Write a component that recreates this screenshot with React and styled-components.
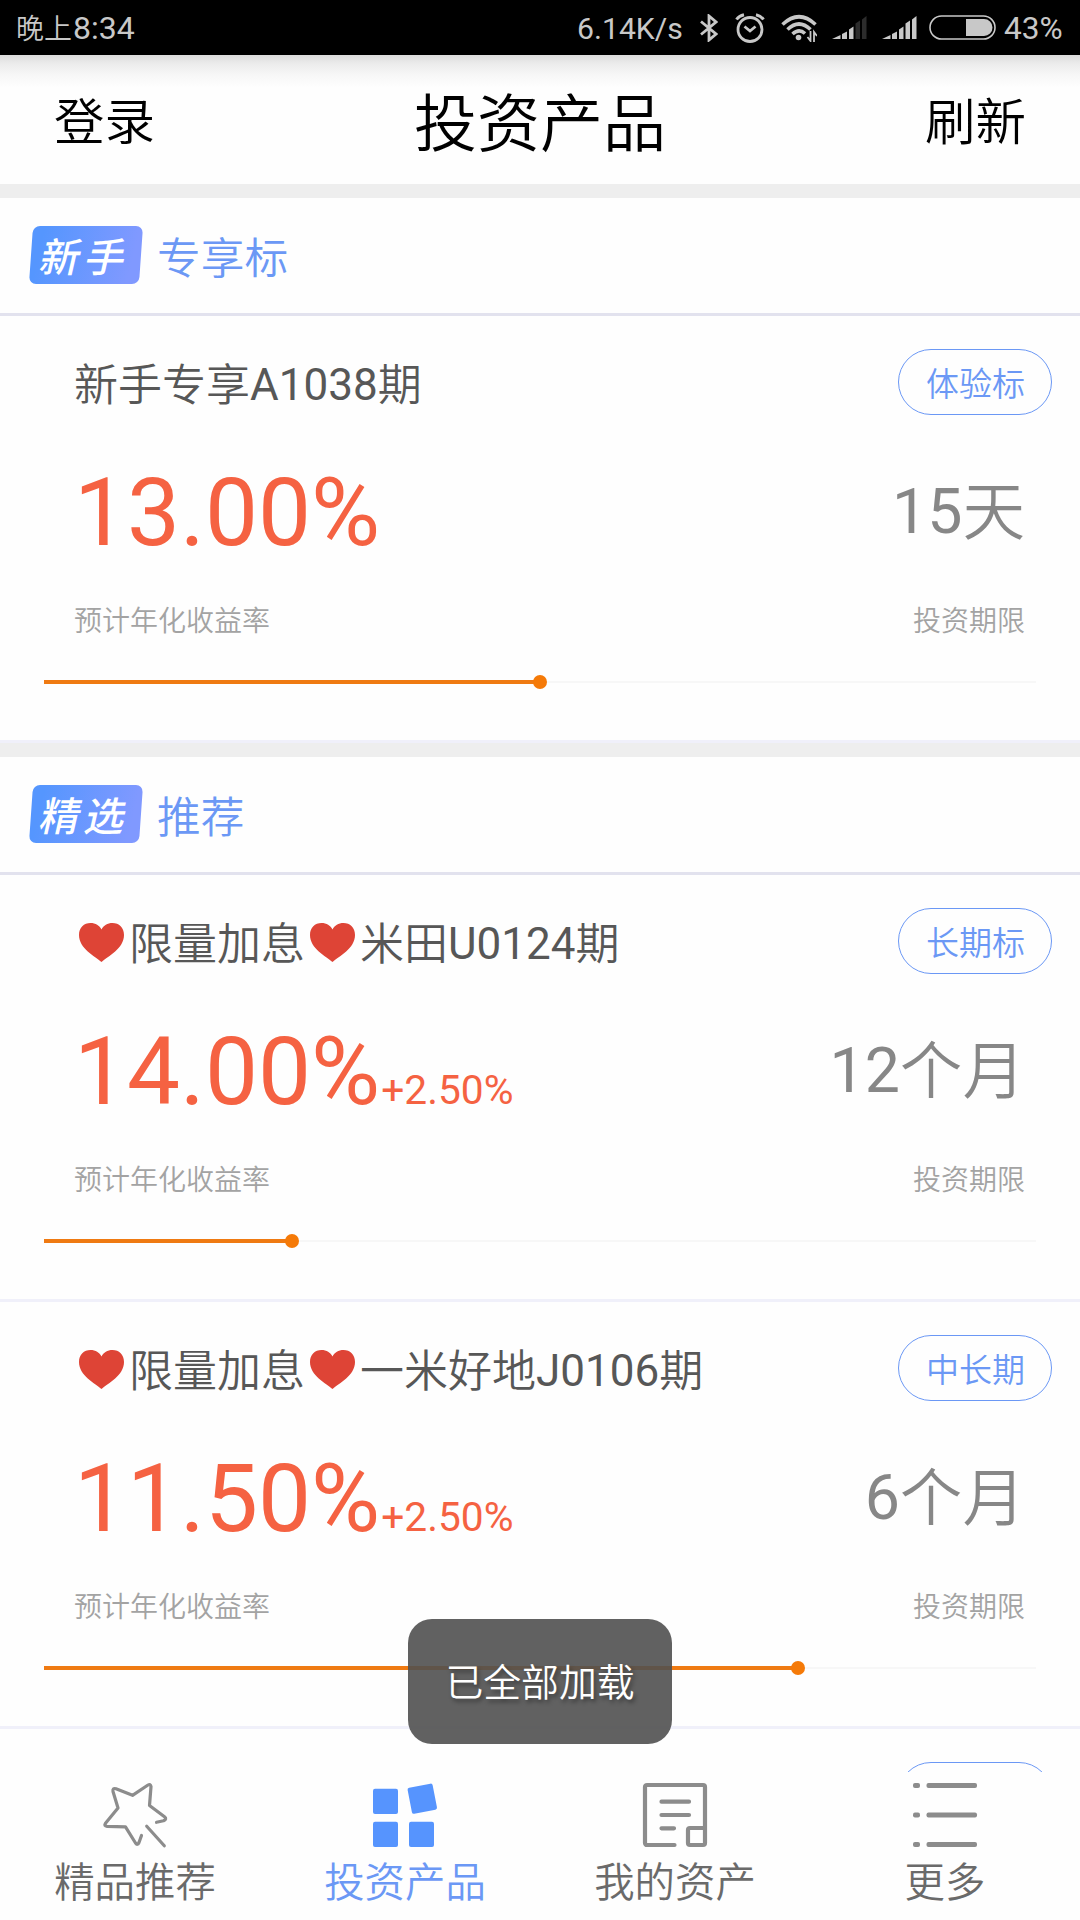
import React from 'react';
import styled, { createGlobalStyle } from 'styled-components';

const GlobalStyle = createGlobalStyle`
  * {
    box-sizing: border-box;
  }

  body {
    margin: 0;
    background: #fff;
    font-family: Roboto, 'Noto Sans CJK SC', sans-serif;
    font-weight: 350;
  }
`;

const BLUE = '#6b98f5';
const GREY = '#8c8c8c';
const STATUS = '#c8c8c8';

const Screen = styled.div`
  position: relative;
  display: flex;
  flex-direction: column;
  width: 1080px;
  height: 1920px;
  overflow: hidden;
  background: #fefefe;
`;

/* status bar */

const StatusBar = styled.div`
  flex: none;
  display: flex;
  align-items: center;
  justify-content: space-between;
  height: 55px;
  padding: 0 17px 0 16px;
  background: #000;
  color: ${STATUS};
  font-size: 32px;
  font-weight: 400;
  line-height: 55px;
`;

const Clock = styled.span`
  padding-top: 2px;
  white-space: nowrap;
`;

const ClockPeriod = styled.span`
  margin-right: 1px;
  font-size: 28px;
  font-weight: 350;
`;

const StatusIcons = styled.div`
  display: flex;
  align-items: center;
  height: 55px;

  svg {
    display: block;
    flex: none;
  }
`;

const Speed = styled.span`
  width: 106px;
  margin-right: 17px;
  padding-top: 1px;
  font-size: 30.2px;
  white-space: nowrap;
`;

const IconGap = styled.span`
  flex: none;
  width: ${(props) => props.$w}px;
`;

const Percent = styled.span`
  width: 59px;
  margin-left: 8px;
  padding-top: 1px;
  font-size: 31.6px;
  white-space: nowrap;
`;

/* title bar */

const TitleBar = styled.header`
  flex: none;
  display: grid;
  grid-template-columns: 1fr auto 1fr;
  align-items: center;
  height: 129px;
  padding: 0 54px;
  background: linear-gradient(#dcdcdc 0, #ececec 9px, #f7f7f7 20px, #fefefe 33px);
  color: #000;
`;

const TitleAction = styled.span`
  font-size: 50.5px;
  line-height: 60px;
  padding-top: 7px;
  text-align: ${(props) => (props.$end ? 'right' : 'left')};
`;

const Title = styled.h1`
  margin: 0;
  padding-top: 11px;
  font-size: 63px;
  font-weight: 350;
  line-height: 76px;
`;

const Band = styled.div`
  flex: none;
  height: 14px;
  background: #eee;
`;

/* product list */

const List = styled.main`
  flex: 1;
  min-height: 0;
  overflow: hidden;
`;

const SectionHead = styled.div`
  display: flex;
  align-items: center;
  height: 118px;
  padding: 0 0 2px 31px;
  border-bottom: 3px solid #e2e2ee;
`;

const Badge = styled.span`
  display: flex;
  align-items: center;
  justify-content: center;
  width: 110px;
  height: 58px;
  padding-top: 7px;
  border-radius: 7px;
  background: linear-gradient(100deg, #5596fe 10%, #8099ff 90%);
  transform: skewX(-4deg);
`;

const BadgeText = styled.span`
  color: #fff;
  font-size: 40px;
  font-weight: 500;
  line-height: 58px;
  letter-spacing: 5px;
  margin-right: 0;
  transform: skewX(-9deg);
`;

const SectionName = styled.span`
  margin-left: 16px;
  padding-top: 9px;
  color: ${BLUE};
  font-size: 43.7px;
  line-height: 60px;
`;

const Card = styled.article`
  height: 427px;
  padding-top: 33px;
  border-bottom: 3px solid #f0f0fa;
`;

const CardTop = styled.div`
  display: flex;
  align-items: center;
  justify-content: space-between;
  height: 66px;
  padding: 0 28px 0 74px;
`;

const Name = styled.h2`
  display: flex;
  align-items: center;
  margin: 0;
  padding-top: 7px;
  color: #575757;
  font-size: 44px;
  font-weight: 350;
  line-height: 60px;
  white-space: nowrap;
`;

const Digits = styled.span`
  font-weight: 400;
  line-height: 1;
  vertical-align: 1.5px;
`;

const HeartBox = styled.svg`
  display: block;
  flex: none;
  width: 45px;
  height: 39px;
  margin: 0 5px 4px;
`;

const Pill = styled.span`
  display: flex;
  align-items: center;
  justify-content: center;
  width: 154px;
  height: 66px;
  padding-left: 1px;
  border: 1.5px solid ${BLUE};
  border-radius: 33px;
  color: ${BLUE};
  font-size: 33px;
`;

const Figures = styled.div`
  display: flex;
  align-items: flex-start;
  justify-content: space-between;
  height: 112px;
  margin-top: 42px;
  padding: 0 55px 0 74px;
`;

const Rate = styled.div`
  color: #f56242;
  font-size: 94.4px;
  font-weight: 400;
  line-height: 112px;
  white-space: nowrap;
`;

const Bonus = styled.span`
  margin-left: 1px;
  font-size: 40.7px;
`;

const Term = styled.div`
  color: #878787;
  font-size: 62.6px;
  line-height: 111px;
`;

const Captions = styled.div`
  display: flex;
  justify-content: space-between;
  height: 40px;
  margin-top: 33px;
  padding: 0 55px 0 74px;
  color: #a3a3a3;
  font-size: 28px;
  line-height: 40px;
`;

const Track = styled.div`
  position: relative;
  height: 4px;
  margin: 38px 44px 0;
  background: linear-gradient(transparent 25%, #f7f7f7 25%, #f7f7f7 75%, transparent 75%);
`;

const Fill = styled.div`
  position: relative;
  height: 4px;
  background: #ef7a12;

  &::after {
    content: '';
    position: absolute;
    top: -5px;
    right: -7px;
    width: 14px;
    height: 14px;
    border-radius: 50%;
    background: #f57a08;
  }
`;

/* bottom navigation */

const Nav = styled.nav`
  flex: none;
  display: grid;
  grid-template-columns: repeat(4, 1fr);
  height: 148px;
  background: #fefefe;
`;

const NavItem = styled.div`
  display: flex;
  flex-direction: column;
  align-items: center;
  padding-top: 11px;
  color: ${(props) => (props.$active ? BLUE : '#6a6a6a')};
  font-size: 40.4px;
  line-height: 50px;

  svg {
    display: block;
    margin-bottom: 12px;
    overflow: visible;
  }
`;

const Toast = styled.div`
  position: absolute;
  top: 1619px;
  left: 408px;
  display: flex;
  align-items: center;
  justify-content: center;
  width: 264px;
  height: 125px;
  padding-bottom: 4px;
  border-radius: 24px;
  background: rgba(80, 80, 80, 0.9);
  color: #fff;
  font-size: 37.8px;
  text-shadow: 2px 3px 4px rgba(0, 0, 0, 0.4);
`;

function BluetoothIcon() {
  return (
    <svg width="18" height="28" viewBox="0 0 18 28" fill="none" stroke={STATUS} strokeWidth="2.8">
      <path d="M1 7.5 16 20 9 26V2l7 6L1 20.5" />
    </svg>
  );
}

function AlarmIcon() {
  return (
    <svg width="30" height="30" viewBox="0 0 30 30" fill="none" stroke={STATUS} strokeWidth="2.8">
      <circle cx="15" cy="16.5" r="12" />
      <path d="M9.5 13.5 15 18l5.5-4.5" />
      <path d="M1.5 6.5Q4 3 9 1.8M28.5 6.5Q26 3 21 1.8" strokeWidth="3" />
    </svg>
  );
}

function WifiIcon() {
  return (
    <svg width="36" height="28" viewBox="0 0 36 28" fill="none" stroke={STATUS} strokeWidth="3.6">
      <path d="M1.5 10.5Q18-5 34.5 10.5" />
      <path d="M6.5 15.5Q18 4.5 29.5 15.5" />
      <path d="M11.5 20Q18 14 24 19.5" />
      <circle cx="17.5" cy="23.5" r="2.8" fill={STATUS} stroke="none" />
      <path d="M29.5 17v10l-3-4M33 28V18l3 4" strokeWidth="1.8" />
    </svg>
  );
}

function SignalIcon({ level }) {
  const bars = [
    'M0 23 8.5 19v4z',
    'M10 18 15 15.5v7.5h-5z',
    'M17 13.5 21.5 10.5V23H17z',
    'M23.5 7.5 28 4.5V23h-4.5z',
    'M30 3.5 34.5 0V23H30z',
  ];

  return (
    <svg width="35" height="23" viewBox="0 0 35 23">
      {bars.map((d, i) => (
        <path key={d} d={d} fill={i < level ? STATUS : '#2c2c2c'} />
      ))}
    </svg>
  );
}

function BatteryIcon() {
  return (
    <svg width="67" height="25" viewBox="0 0 67 25">
      <rect x="1" y="1" width="65" height="23" rx="11.5" fill="none" stroke={STATUS} strokeWidth="1.6" />
      <path d="M37 4h18a8.5 8.5 0 0 1 0 17H37z" fill={STATUS} />
    </svg>
  );
}

function Heart() {
  return (
    <HeartBox viewBox="0 0 45 39">
      <path
        d="M22.5 39C16 33.5 0 25.5 0 12C0 4.5 5 0 11.5 0C16.5 0 20.5 2.5 22.5 6.5C24.5 2.5 28.5 0 33.5 0C40 0 45 4.5 45 12C45 25.5 29 33.5 22.5 39Z"
        fill="#de4436"
      />
    </HeartBox>
  );
}

function StarIcon() {
  return (
    <svg
      width="64"
      height="64"
      viewBox="0 0 64 64"
      fill="none"
      stroke={GREY}
      strokeWidth="3.2"
      strokeLinecap="round"
      strokeLinejoin="round"
    >
      <path d="M53.5 39.3 60.5 37.8Q64.3 36 61.5 33.7L46.5 22.5 48 3.5Q47.5 .5 45 2L29.5 12.3 13 5.8Q9.3 4.7 10 8.5L15 25 2.3 40.5Q.8 43 4 43.3L22.5 43.9 32.5 60Q34.5 62.8 36 59.5L38.5 52.5" />
      <path d="M43.7 43.2 61.3 62.7" />
    </svg>
  );
}

function BlocksIcon() {
  return (
    <svg width="64" height="64" viewBox="0 0 64 64" fill="#5694fe">
      <rect x="0" y="5.7" width="25" height="25.3" rx="2" />
      <rect x="0" y="38.7" width="25" height="25.3" rx="2" />
      <rect x="36" y="38.7" width="25" height="25.3" rx="2" />
      <rect x="36.5" y="2.5" width="25.5" height="26.5" rx="2" transform="rotate(-11 49 15.5)" />
    </svg>
  );
}

function AssetsIcon() {
  return (
    <svg width="64" height="64" viewBox="0 0 64 64" fill="none" stroke={GREY} strokeWidth="4.2" strokeLinecap="round">
      <path d="M31.5 62H4a2 2 0 0 1-2-2V4a2 2 0 0 1 2-2h56a2 2 0 0 1 2 2v56a2 2 0 0 1-2 2H47a2 2 0 0 1-2-2V47a2 2 0 0 1 2-2h14" />
      <path d="M18.5 18.7h27.5M18.5 32h27.5M18.5 45.3h12.5" />
    </svg>
  );
}

function MoreIcon() {
  return (
    <svg width="64" height="64" viewBox="0 0 64 64" fill={GREY}>
      {[0, 29.5, 59].map((y) => (
        <React.Fragment key={y}>
          <rect x="0" y={y} width="7" height="5" rx="2" />
          <rect x="13.5" y={y} width="50.5" height="5" rx="2" />
        </React.Fragment>
      ))}
    </svg>
  );
}

const newcomer = [
  { name: ['新手专享', 'A1038', '期'], tag: '体验标', rate: '13.00%', term: ['15', '天'], progress: 50 },
];

const featured = [
  {
    hot: true,
    name: ['米田', 'U0124', '期'],
    tag: '长期标',
    rate: '14.00%',
    bonus: '+2.50%',
    term: ['12', '个月'],
    progress: 25,
  },
  {
    hot: true,
    name: ['一米好地', 'J0106', '期'],
    tag: '中长期',
    rate: '11.50%',
    bonus: '+2.50%',
    term: ['6', '个月'],
    progress: 76,
  },
];

const tabs = [
  { label: '精品推荐', Icon: StarIcon },
  { label: '投资产品', Icon: BlocksIcon, active: true },
  { label: '我的资产', Icon: AssetsIcon },
  { label: '更多', Icon: MoreIcon },
];

function Product({ item }) {
  const [prefix, code, suffix] = item.name;
  const [amount, unit] = item.term;

  return (
    <Card>
      <CardTop>
        <Name>
          {item.hot && (
            <>
              <Heart />
              <span>限量加息</span>
              <Heart />
            </>
          )}
          <span>
            {prefix}
            <Digits>{code}</Digits>
            {suffix}
          </span>
        </Name>
        <Pill>{item.tag}</Pill>
      </CardTop>
      <Figures>
        <Rate>
          {item.rate}
          {item.bonus && <Bonus>{item.bonus}</Bonus>}
        </Rate>
        <Term>
          <Digits>{amount}</Digits>
          {unit}
        </Term>
      </Figures>
      <Captions>
        <span>预计年化收益率</span>
        <span>投资期限</span>
      </Captions>
      <Track>
        <Fill style={{ width: `${item.progress}%` }} />
      </Track>
    </Card>
  );
}

function Section({ badge, name, items }) {
  return (
    <section>
      <SectionHead>
        <Badge>
          <BadgeText>{badge}</BadgeText>
        </Badge>
        <SectionName>{name}</SectionName>
      </SectionHead>
      {items.map((item) => (
        <Product key={item.name[1]} item={item} />
      ))}
    </section>
  );
}

function App() {
  return (
    <Screen>
      <GlobalStyle />
      <StatusBar>
        <Clock>
          <ClockPeriod>晚上</ClockPeriod>8:34
        </Clock>
        <StatusIcons>
          <Speed>6.14K/s</Speed>
          <BluetoothIcon />
          <IconGap $w={17} />
          <AlarmIcon />
          <IconGap $w={16} />
          <WifiIcon />
          <IconGap $w={15} />
          <SignalIcon level={3} />
          <IconGap $w={15} />
          <SignalIcon level={5} />
          <IconGap $w={12} />
          <BatteryIcon />
          <Percent>43%</Percent>
        </StatusIcons>
      </StatusBar>
      <TitleBar>
        <TitleAction>登录</TitleAction>
        <Title>投资产品</Title>
        <TitleAction $end>刷新</TitleAction>
      </TitleBar>
      <Band />
      <List>
        <Section badge="新手" name="专享标" items={newcomer} />
        <Band />
        <Section badge="精选" name="推荐" items={featured} />
        <Card>
          <CardTop>
            <Name />
            <Pill />
          </CardTop>
        </Card>
      </List>
      <Nav>
        {tabs.map(({ label, Icon, active }) => (
          <NavItem key={label} $active={active}>
            <Icon />
            {label}
          </NavItem>
        ))}
      </Nav>
      <Toast>已全部加载</Toast>
    </Screen>
  );
}

export default App;
